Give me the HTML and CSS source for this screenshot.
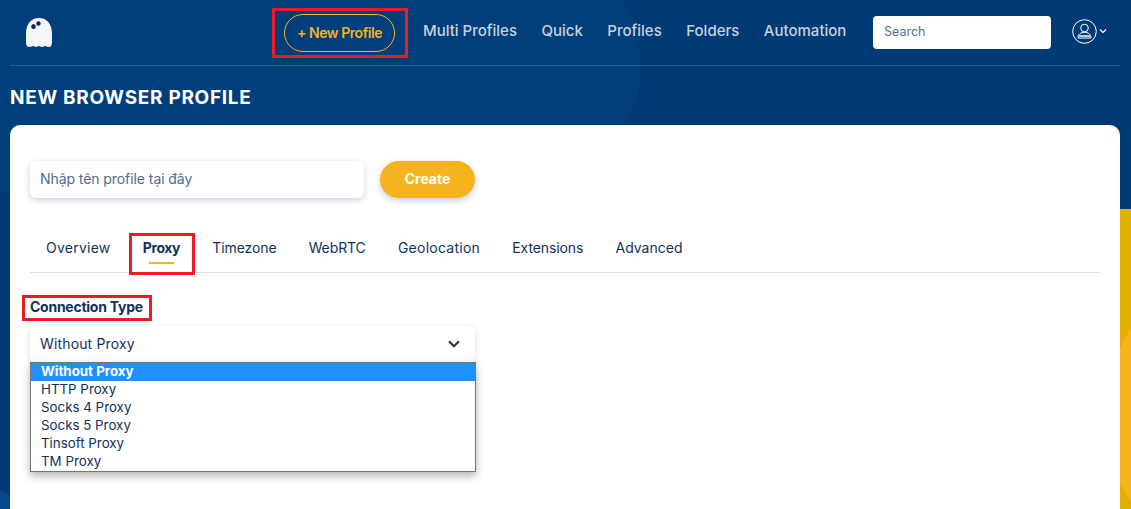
FILE: index.html
```html
<!doctype html>
<html lang="vi">
<head>
	<meta charset="utf-8">
	<title>New Browser Profile</title>
	<link rel="stylesheet" href="styles.css">
</head>
<body>
	<div class="bg-circle"></div>
	<div class="bg-corner"></div>
	<div class="bg-yellow"><div class="bg-yellow-circle"></div></div>

	<header class="topbar">
		<a class="logo" href="#">
			<svg width="30" height="32" viewBox="0 0 30 32">
				<path d="M15 1C7 1 2 7 2 17v8c0 3 1 5 3 5 2 0 3-1 4-1s2 1 3 1 2-1 3-1 2 1 3 1 2-1 3-1 2 1 4 1c2 0 3-2 3-5v-8C28 7 23 1 15 1z" fill="#f4f6fa"/>
				<ellipse cx="9.500" cy="9.500" rx="2.300" ry="2.500" fill="#0b2a50"/>
				<ellipse cx="14.500" cy="6.500" rx="2.200" ry="2.300" fill="#0b2a50"/>
			</svg>
		</a>
		<nav class="nav">
			<span class="mark-new"><a class="btn-new" href="#">+ New Profile</a></span>
			<a class="nav-link" href="#">Multi Profiles</a>
			<a class="nav-link" href="#">Quick</a>
			<a class="nav-link" href="#">Profiles</a>
			<a class="nav-link" href="#">Folders</a>
			<a class="nav-link" href="#">Automation</a>
		</nav>
		<input class="search" type="text" placeholder="Search">
		<a class="user" href="#">
			<svg width="25" height="25" viewBox="0 0 25 25" fill="none" stroke="#fff" stroke-width="1">
				<circle cx="12.500" cy="12.500" r="11.800"/>
				<circle cx="12.500" cy="9" r="3.800"/>
				<path d="M6 19c0-4 2.800-5.600 6.500-5.600s6.500 1.600 6.500 5.600z"/>
				<path d="M6.500 17h12" stroke="#b9c6d6" stroke-width="2"/>
			</svg>
			<svg width="8" height="6" viewBox="0 0 8 6" fill="none" stroke="#fff" stroke-width="1.200">
				<path d="M1 1.500l3 3 3-3"/>
			</svg>
		</a>
	</header>

	<h1 class="page-title">NEW BROWSER PROFILE</h1>

	<main class="card">
		<div class="name-row">
			<input class="name-input" type="text" placeholder="Nhập tên profile tại đây">
			<button class="btn-create">Create</button>
		</div>

		<ul class="tabs">
			<li class="tab tab-wide">Overview</li>
			<li class="tab tab-active">Proxy</li>
			<li class="tab tab-tight">Timezone</li>
			<li class="tab tab-tight">WebRTC</li>
			<li class="tab tab-wide">Geolocation</li>
			<li class="tab tab-tight">Extensions</li>
			<li class="tab">Advanced</li>
		</ul>

		<div class="field">
			<label class="field-label">Connection Type</label>
			<div class="select">
				<span>Without Proxy</span>
				<svg width="12" height="8" viewBox="0 0 12 8" fill="none" stroke="#333" stroke-width="2.200">
					<path d="M1 1.200l5 5 5-5"/>
				</svg>
				<ul class="select-menu">
					<li class="option option-active">Without Proxy</li>
					<li class="option">HTTP Proxy</li>
					<li class="option">Socks 4 Proxy</li>
					<li class="option">Socks 5 Proxy</li>
					<li class="option">Tinsoft Proxy</li>
					<li class="option">TM Proxy</li>
				</ul>
			</div>
		</div>
	</main>
</body>
</html>
```

FILE: styles.css
```css
* {
	box-sizing: border-box;
}

html, body {
	height: 100%;
}

body {
	display: flex;
	flex-direction: column;
	margin: 0;
	padding: 0 11px 0 10px;
	background: #003a74;
	color: #12315c;
	font: 14px/18px Inter, 'Noto Sans', sans-serif;
	overflow: hidden;
	position: relative;
}

a {
	text-decoration: none;
}

ul {
	list-style: none;
	margin: 0;
	padding: 0;
}

/* background shapes */
.bg-circle {
	position: absolute;
	left: 0;
	top: -61px;
	width: 641px;
	height: 252px;
	border-radius: 0 126px 126px 0;
	background: #023e7a;
}

.bg-corner {
	position: absolute;
	left: 0;
	top: 490px;
	width: 10px;
	height: 19px;
	background: #03478c;
	clip-path: polygon(0 0, 100% 5px, 100% 100%, 0 100%);
}

.bg-yellow {
	position: absolute;
	right: 0;
	top: 209px;
	width: 60px;
	height: 300px;
	background: #e1b000;
	overflow: hidden;
}

.bg-yellow-circle {
	position: absolute;
	left: 35px;
	top: 41px;
	width: 330px;
	height: 330px;
	border-radius: 50%;
	background: #f6b31e;
}

/* top bar */
.topbar {
	position: relative;
	display: flex;
	flex: none;
	align-items: center;
	height: 66px;
	padding: 0 0 0 14px;
	border-bottom: 1px solid #2a5a8e;
}

.logo {
	display: flex;
	flex: none;
	width: 248px;
}

.nav {
	display: flex;
	flex: none;
	align-items: center;
	gap: 24.5px;
	width: 601px;
}

.nav-link {
	color: #c5d2e0;
	font-size: 15px;
	font-weight: 500;
	line-height: 18px;
	margin-top: -4px;
	white-space: nowrap;
}

.mark-new {
	display: block;
	flex: none;
	padding: 3px 10px 3px 9px;
	margin-right: -9.500px;
	border: 3px solid #ed1c24;
}

.btn-new {
	display: block;
	width: 111px;
	height: 38px;
	border: 1px solid #f6b31e;
	border-radius: 19px;
	color: #f6b31e;
	font-size: 14px;
	font-weight: 600;
	line-height: 35px;
	letter-spacing: -0.45px;
	text-align: center;
}

.search {
	flex: none;
	width: 178px;
	height: 33px;
	margin-top: -1px;
	border: 0;
	border-radius: 4px;
	padding: 0 11px 1px;
	background: #fff;
	font: 12.5px Inter, sans-serif;
}

.search::placeholder {
	color: #56708f;
}

.user {
	display: flex;
	flex: none;
	align-items: center;
	gap: 2px;
	margin-left: 21px;
	margin-top: -3px;
}

.page-title {
	position: relative;
	flex: none;
	margin: 0;
	height: 59px;
	padding-top: 19px;
	color: #fff;
	font-size: 19px;
	line-height: 25px;
	font-weight: 700;
	letter-spacing: 0.7px;
}

/* main card */
.card {
	position: relative;
	flex: 1;
	padding: 36px 20px 0;
	background: #fff;
	border-radius: 10px 10px 0 0;
}

.name-row {
	display: flex;
	align-items: center;
	gap: 16px;
}

.name-input {
	width: 334px;
	height: 37px;
	border: 0;
	border-radius: 6px;
	padding: 0 10px 2px;
	background: #fff;
	box-shadow: 0 2px 6px rgba(40, 70, 120, 0.25);
	font: 14px Inter, sans-serif;
	letter-spacing: -0.075px;
}

.name-input::placeholder {
	color: #4e6c91;
}

.btn-create {
	width: 95px;
	height: 37px;
	border: 0;
	border-radius: 19px;
	padding: 0 0 2px;
	background: #f6b31e;
	box-shadow: 0 3px 6px rgba(40, 70, 120, 0.25);
	color: #fff;
	font: 700 14px Inter, sans-serif;
}

.tabs {
	display: flex;
	height: 75px;
	padding: 41px 0 0 16px;
	gap: 32.2px;
	border-bottom: 1px solid #e0e0e4;
}

.tab {
	color: #12315c;
	white-space: nowrap;
}

.tab-wide {
	letter-spacing: 0.25px;
}

.tab-tight {
	letter-spacing: -0.1px;
}

.tab-active {
	font-weight: 700;
	letter-spacing: -0.4px;
	position: relative;
}

/* red annotation box */
.tab-active::before {
	content: "";
	position: absolute;
	left: -14px;
	right: -15px;
	top: -6px;
	height: 36px;
	border: 3px solid #ed1c24;
}

.tab-active::after {
	content: "";
	position: absolute;
	left: 6px;
	top: 23px;
	width: 25px;
	height: 2px;
	background: #f6b31e;
}

.field {
	margin-top: 22px;
}

.field-label {
	display: block;
	width: fit-content;
	height: 26px;
	margin: 0 0 5px -8px;
	padding: 0 6px 0 5px;
	border: 3px solid #ed1c24;
	line-height: 18px;
	font-weight: 700;
	letter-spacing: -0.25px;
	color: #12315c;
}

.select {
	position: relative;
	display: flex;
	align-items: center;
	justify-content: space-between;
	width: 445px;
	height: 36px;
	padding: 0 15px 0 10px;
	border-radius: 6px;
	background: #fff;
	box-shadow: 0 2px 6px rgba(40, 70, 120, 0.2);
	letter-spacing: 0.15px;
}

.select-menu {
	position: absolute;
	left: 0;
	top: 36px;
	width: 446px;
	background: #fff;
	border: 1px solid #767676;
	box-shadow: 0 4px 8px rgba(0, 0, 0, 0.3);
	font-size: 13.33px;
	letter-spacing: 0;
}

.option {
	height: 18px;
	padding: 0 10px;
	line-height: 16px;
}

.option-active {
	background: #1e90ff;
	color: #fff;
	font-weight: 700;
}
```
